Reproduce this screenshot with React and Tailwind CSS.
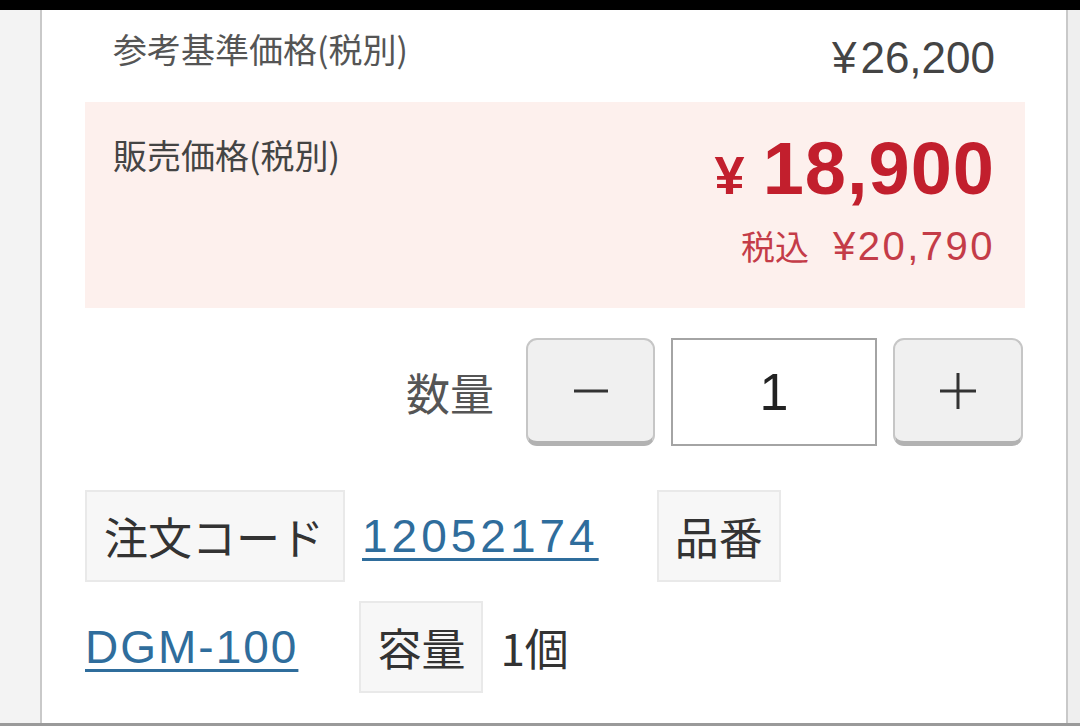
import React from "react";

const jp = { fontFamily: '"Noto Sans CJK JP", "Noto Sans", sans-serif' };
const num = { fontFamily: '"Liberation Sans", "Noto Sans CJK JP", sans-serif' };

function LabelBox({ children, className = "px-[16px]" }) {
  return (
    <div
      className={
        "h-[92px] flex items-center bg-[#f7f7f7] border-2 border-[#e9e9e9] text-[44px] leading-[50px] text-[#333] " +
        className
      }
      style={jp}
    >
      {children}
    </div>
  );
}

function LinkText({ children, className = "" }) {
  return (
    <a
      href="#"
      className={
        "text-[46px] leading-[50px] text-[#2f6d9c] underline decoration-[3px] underline-offset-[6px] " +
        className
      }
      style={num}
    >
      {children}
    </a>
  );
}

export default function App() {
  return (
    <div className="w-[1080px] h-[726px] flex flex-col bg-black overflow-hidden">
      <div className="h-[10px] bg-black shrink-0" />
      <div className="flex flex-1 bg-[#f4f4f4]">
        <div className="w-[40px] bg-[#f3f3f3]" />
        <div className="flex-1 bg-white border-l-2 border-r-2 border-[#c9c9c9] pl-[43px] pr-[41px] flex flex-col">
          {/* Reference price row */}
          <div className="h-[92px] flex justify-between pl-[28px] pr-[30px] shrink-0">
            <div className="pt-[19px] text-[34px] leading-[40px] text-[#555]" style={jp}>
              参考基準価格(税別)
            </div>
            <div className="pt-[23px] text-[44px] leading-[50px] text-[#444]" style={num}>
              <span className="mr-[4px]">¥</span>26,200
            </div>
          </div>

          {/* Sale price box */}
          <div className="h-[206px] bg-[#fdf0ed] flex justify-between pl-[28px] pr-[30px] shrink-0">
            <div className="pt-[33px] text-[34px] leading-[40px] text-[#444]" style={jp}>
              販売価格(税別)
            </div>
            <div className="pt-[27px] flex flex-col items-end">
              <div className="flex items-baseline text-[#c21f2d] font-bold" style={num}>
                <span className="text-[54px] leading-[80px] mr-[18px]">¥</span>
                <span className="text-[74px] leading-[80px] tracking-[1px]">18,900</span>
              </div>
              <div className="mt-[11px] flex items-baseline text-[#c43c48] leading-[40px]">
                <span className="text-[34px]" style={jp}>税込</span>
                <span className="text-[40px] ml-[24px] tracking-[2.5px]" style={num}>
                  ¥20,790
                </span>
              </div>
            </div>
          </div>

          {/* Quantity row */}
          <div className="mt-[30px] flex justify-end items-center pr-[2px] shrink-0">
            <div className="text-[44px] leading-[50px] text-[#555] mr-[32px]" style={jp}>
              数量
            </div>
            <button className="w-[129px] h-[108px] rounded-[11px] bg-[#f0f0f0] border-2 border-b-[5px] border-[#c6c6c6] border-b-[#b2b2b2] flex items-center justify-center">
              <svg width="36" height="6" viewBox="0 0 36 6">
                <line x1="1" y1="3" x2="35" y2="3" stroke="#333" strokeWidth="3" />
              </svg>
            </button>
            <div
              className="w-[206px] h-[108px] mx-[16px] bg-white border-2 border-[#a4a4a4] flex items-center justify-center text-[52px] text-[#222]"
              style={num}
            >
              1
            </div>
            <button className="w-[130px] h-[108px] rounded-[11px] bg-[#f0f0f0] border-2 border-b-[5px] border-[#c6c6c6] border-b-[#b2b2b2] flex items-center justify-center">
              <svg width="38" height="38" viewBox="0 0 38 38">
                <line x1="1" y1="19" x2="37" y2="19" stroke="#333" strokeWidth="3" />
                <line x1="19" y1="1" x2="19" y2="37" stroke="#333" strokeWidth="3" />
              </svg>
            </button>
          </div>

          {/* Spec row 1 */}
          <div className="mt-[44px] flex items-center shrink-0">
            <LabelBox className="pl-[17px] pr-[19px]">注文コード</LabelBox>
            <LinkText className="ml-[17px] tracking-[4px]">12052174</LinkText>
            <div className="ml-[58px]">
              <LabelBox>品番</LabelBox>
            </div>
          </div>

          {/* Spec row 2 */}
          <div className="mt-[19px] flex items-center shrink-0">
            <LinkText className="tracking-[2px]">DGM-100</LinkText>
            <div className="ml-[61px]">
              <LabelBox>容量</LabelBox>
            </div>
            <div className="ml-[17px] text-[44px] leading-[50px] text-[#333]" style={jp}>
              1個
            </div>
          </div>
        </div>
        <div className="w-[12px] bg-[#efefef]" />
      </div>
      <div className="h-[3px] bg-[#9a9a9a] shrink-0" />
    </div>
  );
}
